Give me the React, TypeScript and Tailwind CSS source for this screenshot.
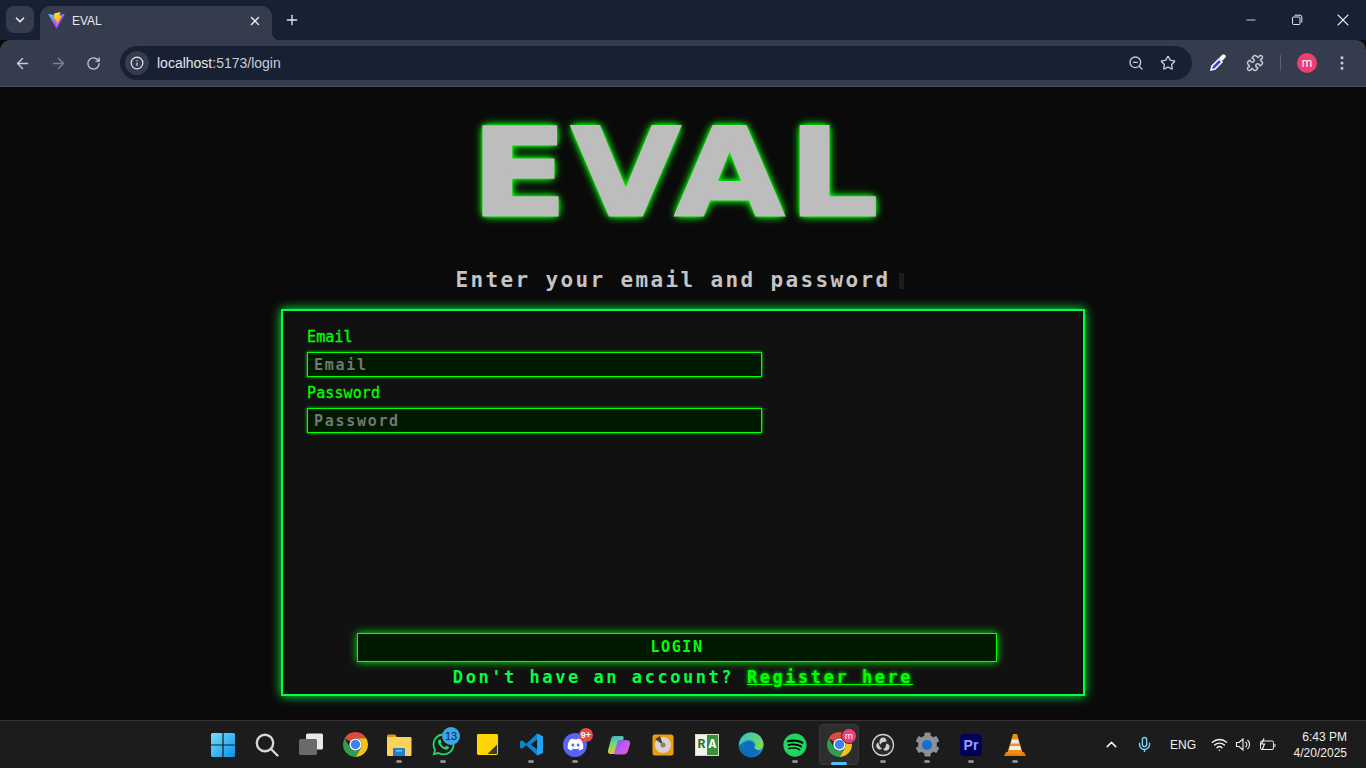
import React from "react";
import { ArrowLeft, ArrowRight, RotateCw, Info, ZoomOut, Star, Puzzle, EllipsisVertical, X, Plus, ChevronDown, ChevronUp, Minus, Mic, Wifi } from "lucide-react";
import { FaWhatsapp, FaDiscord, FaSpotify, FaCog } from "react-icons/fa";

const Vite = () => (
  <svg width="17" height="17" viewBox="0 0 410 404">
    <defs>
      <linearGradient id="va" x1="6" y1="33" x2="235" y2="344" gradientUnits="userSpaceOnUse"><stop stopColor="#41D1FF" /><stop offset="1" stopColor="#BD34FE" /></linearGradient>
      <linearGradient id="vb" x1="194" y1="8" x2="236" y2="293" gradientUnits="userSpaceOnUse"><stop stopColor="#FFEA83" /><stop offset="0.08" stopColor="#FFDD35" /><stop offset="1" stopColor="#FFA800" /></linearGradient>
    </defs>
    <path d="M399.641 59.5246L215.643 388.545C211.844 395.338 202.084 395.378 198.228 388.618L10.5817 59.5563C6.38087 52.1896 12.6802 43.2665 21.0281 44.7586L205.223 77.6824C206.398 77.8924 207.601 77.8904 208.776 77.6763L389.119 44.8058C397.439 43.2894 403.768 52.1434 399.641 59.5246Z" fill="url(#va)" />
    <path d="M292.965 1.5744L156.801 28.2552C154.563 28.6937 152.906 30.5903 152.771 32.8664L144.395 174.33C144.198 177.662 147.258 180.248 150.51 179.498L188.42 170.749C191.967 169.931 195.172 173.055 194.443 176.622L183.18 231.775C182.422 235.487 185.907 238.661 189.532 237.56L212.947 230.446C216.577 229.344 220.065 232.527 219.297 236.242L201.398 322.875C200.278 328.294 207.486 331.249 210.492 326.603L212.5 323.5L323.454 102.072C325.312 98.3645 322.108 94.137 318.036 94.9228L279.014 102.454C275.347 103.161 272.227 99.746 273.262 96.1583L298.731 7.86689C299.767 4.27314 296.636 0.855181 292.965 1.5744Z" fill="url(#vb)" />
  </svg>
);

const Chrome = () => (
  <svg width="25" height="25" viewBox="2 2 20 20">
    <path d="M12 2a10 10 0 0 1 8.66 5H12a5 5 0 0 0-4.33 2.5L3.34 7A10 10 0 0 1 12 2z" fill="#dd4b3e" />
    <path d="M20.66 7A10 10 0 0 1 12 22l4.33-7.5A5 5 0 0 0 12 7z" fill="#f5c21b" />
    <path d="M3.34 7l4.33 7.5A5 5 0 0 0 16.33 14.5L12 22A10 10 0 0 1 3.34 7z" fill="#2f9e4f" />
    <circle cx="12" cy="12" r="4.9" fill="#fff" />
    <circle cx="12" cy="12" r="3.8" fill="#3d82f0" />
  </svg>
);

const Slot = ({ children, dot, active }: { children: React.ReactNode; dot?: boolean; active?: boolean }) => (
  <div className="relative w-11 h-[47px] flex items-center justify-center">
    {active && <div className="absolute left-[2px] top-[3px] w-[40px] h-[41px] rounded bg-[#2e2e2e] border border-[#3a3a3a]" />}
    <div className="relative flex items-center justify-center w-7 h-7">{children}</div>
    {dot && <div className="absolute left-[19px] bottom-[5px] w-[6px] h-[3px] rounded-full bg-[#8a8a8a]" />}
    {active && <div className="absolute left-[14px] bottom-[3px] w-[16px] h-[3px] rounded-full bg-[#4cc2ff]" />}
  </div>
);

const Field = ({ label, type }: { label: string; type: string }) => (
  <div className="flex flex-col">
    <label className="text-[15px] leading-[20px] text-[#00ff00] [-webkit-text-stroke:0.3px_#00ff00] font-['DejaVu_Sans_Mono',monospace] tracking-[0.1px]">{label}</label>
    <input
      type={type}
      placeholder={label}
      className="mt-[5px] w-[455px] h-[25px] px-[6px] bg-[#001a00] border border-[#00ff00] shadow-[0_0_3px_#00ff00] outline-none text-[15px] tracking-[1.7px] font-bold font-['DejaVu_Sans_Mono',monospace] placeholder:text-[#757575]"
    />
  </div>
);

export default function App() {
  return (
    <div className="w-[1366px] h-[768px] overflow-hidden flex flex-col bg-[#0a0a0a] font-['Roboto',sans-serif]">
      {/* tab strip */}
      <div className="h-[40px] bg-[#182133] flex items-end pl-[6px] shrink-0 text-[#e6e8ec]">
        <div className="w-[28px] h-[27px] mb-[7px] rounded-lg bg-[#343c4d] flex items-center justify-center">
          <ChevronDown size={14} strokeWidth={3} />
        </div>
        <div className="relative ml-[6px] w-[232px] h-[34px] rounded-t-[10px] bg-[#343c4d] flex items-center pl-[8px] pr-[10px] pb-[5px]">
          <Vite />
          <span className="ml-[7px] text-[12px] font-['Liberation_Sans',sans-serif] text-[#e6e8ec] flex-1">EVAL</span>
          <X size={14} strokeWidth={2.5} />
          <div className="absolute -right-[8px] bottom-0 w-[8px] h-[8px] bg-[radial-gradient(circle_at_100%_0,transparent_8px,#343c4d_8.5px)]" />
        </div>
        <div className="ml-[12px] mb-[12px] "><Plus size={16} strokeWidth={2} /></div>
        <div className="ml-auto flex items-center h-[40px] text-[#e6e8ec]">
          <div className="w-[46px] flex justify-center"><Minus size={14} strokeWidth={1.5} /></div>
          <div className="w-[46px] flex justify-center">
            <svg width="12" height="12" viewBox="0 0 12 12" fill="none" stroke="currentColor"><rect x="1.5" y="3" width="7.5" height="7.5" rx="1" /><path d="M3.5 1.2h5.5a1.8 1.8 0 0 1 1.8 1.8v5.5" /></svg>
          </div>
          <div className="w-[46px] flex justify-center"><X size={20} strokeWidth={1.3} /></div>
        </div>
      </div>
      {/* toolbar */}
      <div className="h-[47px] bg-[#343c4d] rounded-t-[10px] flex items-center shrink-0 border-b border-[#4a505c] text-[#c7ccd6]">
        <div className="w-[44px] pl-[14px]"><ArrowLeft size={17} strokeWidth={2} /></div>
        <div className="w-[36px] pl-[6px] text-[#7e8594]"><ArrowRight size={17} strokeWidth={2} /></div>
        <div className="w-[40px] pl-[6px]"><RotateCw size={15} strokeWidth={2} /></div>
        <div className="w-[1072px] h-[34px] rounded-full bg-[#182133] flex items-center pl-[5px] pr-[16px]">
          <div className="w-[24px] h-[24px] rounded-full bg-[#343c4d] flex items-center justify-center text-[#e6e8ec]"><Info size={14} /></div>
          <span className="ml-[8px] text-[14px] text-[#e6e8ec] font-['Liberation_Sans',sans-serif]">localhost<span className="text-[#c7ccd6]">:5173/login</span></span>
          <div className="ml-auto flex items-center gap-[16px] text-[#c7ccd6]">
            <ZoomOut size={16} />
            <Star size={16} strokeWidth={2} />
          </div>
        </div>
        <div className="ml-[17px] w-[18px] text-white">
          <svg width="18" height="18" viewBox="0 0 18 18"><path d="M2 16l1-4 7-7 3 3-7 7z" fill="#2b50c8" stroke="#fff" strokeWidth="1.5" /><path d="M10 4l3-3a2 2 0 0 1 3 3l-3 3z" fill="#fff" /></svg>
        </div>
        <div className="ml-[19px] text-[#c7ccd6]"><Puzzle size={18} /></div>
        <div className="ml-[16px] w-px h-[16px] bg-[#5a606e]" />
        <div className="ml-[16px] w-[20px] h-[20px] rounded-full bg-[#ee3f73] text-white text-[12px] flex items-center justify-center">m</div>
        <div className="ml-[16px] text-[#c7ccd6]"><EllipsisVertical size={18} /></div>
      </div>
      {/* page */}
      <main className="flex-1 min-h-0 flex flex-col items-center bg-[#0a0a0a]">
        <h1 className="mt-[22px] h-[129px] leading-[128px] text-[122px] font-bold tracking-[4px] scale-x-[1.15] -ml-[12px] text-[#bdbdbd] [-webkit-text-stroke:3px_#bdbdbd] font-['DejaVu_Sans',sans-serif] [text-shadow:0_0_5px_#00ff00,0_0_5px_#00ff00,0_0_8px_#00ff00,0_0_10px_#00ff00]">EVAL</h1>
        <div className="mt-[30px] h-[24px] flex items-center -ml-[7px] pt-[2px]">
          <span className="text-[21px] font-bold tracking-[2.36px] text-[#c4c4c4] font-['DejaVu_Sans_Mono',monospace]">Enter your email and password</span>
          <span className="ml-[8px] w-[5px] h-[16px] bg-[#1c1c1c]" />
        </div>
        <section className="mt-[17px] w-[804px] h-[387px] border-2 border-[#00ff41] bg-[#111111] shadow-[0_0_10px_#00ff41] pt-[16px] px-[24px] pb-[7px] flex flex-col">
          <div className="flex flex-col gap-[6px]">
            <Field label="Email" type="email" />
            <Field label="Password" type="password" />
          </div>
          <button className="mt-auto ml-[50px] w-[640px] h-[29px] bg-[#001a00] border border-[#00ff00] shadow-[0_0_8px_#00ff00] text-[#00ff00] text-[15px] font-bold tracking-[1.6px] font-['DejaVu_Sans_Mono',monospace]">LOGIN</button>
          <p className="mt-[5px] text-center text-[17px] leading-[20px] font-bold tracking-[2.55px] text-[#00ff41] font-['DejaVu_Sans_Mono',monospace]">
            Don't have an account? <a className="text-[#00ff00] underline [text-shadow:0_0_4px_#00ff00]">Register here</a>
          </p>
        </section>
      </main>
      {/* taskbar */}
      <div className="h-[48px] shrink-0 bg-[#1c1c1c] border-t border-[#333] flex items-center pl-[201px] text-white">
        <Slot>
          <svg width="24" height="24" viewBox="0 0 24 24">
            <defs><linearGradient id="w" x1="0" y1="0" x2="1" y2="1"><stop stopColor="#6fe2ff" /><stop offset="1" stopColor="#0f8fe8" /></linearGradient></defs>
            <path d="M0 1.5A1.5 1.5 0 0 1 1.5 0H11.4V11.4H0zM12.6 0H22.5A1.5 1.5 0 0 1 24 1.5V11.4H12.6zM0 12.6H11.4V24H1.5A1.5 1.5 0 0 1 0 22.5zM12.6 12.6H24V22.5A1.5 1.5 0 0 1 22.5 24H12.6z" fill="url(#w)" />
          </svg>
        </Slot>
        <Slot>
          <svg width="24" height="24" viewBox="0 0 24 24" fill="none" stroke="#d5d5d5" strokeWidth="2.4"><circle cx="10" cy="10" r="8.2" /><path d="M16 16l6.5 6.5" strokeLinecap="round" /></svg>
        </Slot>
        <Slot>
          <svg width="24" height="24" viewBox="0 0 24 24"><rect x="7" y="0.5" width="17" height="16" rx="1.5" fill="#e8e8e8" /><rect x="0" y="6" width="18" height="16" rx="1.5" fill="#6a6a6a" /></svg>
        </Slot>
        <Slot><Chrome /></Slot>
        <Slot dot>
          <svg width="26" height="24" viewBox="0 0 26 24"><path d="M1 3a1.5 1.5 0 0 1 1.5-1.5H9l2 2.5H1z" fill="#d69a12" /><path d="M1 4h23.5a1 1 0 0 1 1 1v17a1 1 0 0 1-1 1H2a1 1 0 0 1-1-1z" fill="#fbd35a" /><path d="M8 15h10a1 1 0 0 1 1 1v7H7v-7a1 1 0 0 1 1-1z" fill="#1f7fd0" /><rect x="10" y="17" width="6" height="1.5" fill="#7fc3f2" /></svg>
        </Slot>
        <Slot dot>
          <FaWhatsapp size={25} color="#25d366" />
          <div className="absolute -right-[3px] -top-[4px] w-[18px] h-[18px] rounded-full bg-[#3ba7e8] text-[#10212e] text-[11px] leading-[18px] text-center font-['Liberation_Sans',sans-serif]">13</div>
        </Slot>
        <Slot>
          <svg width="23" height="23" viewBox="0 0 24 24"><rect x="1" y="1" width="22" height="22" rx="1.5" fill="#ffd400" /><path d="M22 12L12 22h10z" fill="#3a3a3a" /></svg>
        </Slot>
        <Slot dot>
          <svg width="25" height="25" viewBox="0 0 24 24"><path d="M17.5 1.5L23 4.2V19.8L17.5 22.5L7 12.8L2.8 16L1 15V9L2.8 8L7 11.2Z M17.5 7.5L11 12L17.5 16.5Z" fill="#0a85d1" fillRule="evenodd" /><path d="M17.5 1.5L23 4.2V19.8L17.5 22.5Z" fill="#22a4ee" /></svg>
        </Slot>
        <Slot dot>
          <div className="w-[24px] h-[24px] rounded-full bg-[#5865f2] flex items-center justify-center"><FaDiscord size={17} color="#fff" /></div>
          <div className="absolute -right-[4px] -top-[3px] w-[14px] h-[14px] rounded-full bg-[#e5484d] text-white text-[9px] leading-[14px] text-center font-bold font-['Liberation_Sans',sans-serif]">9+</div>
        </Slot>
        <Slot>
          <svg width="24" height="24" viewBox="0 0 24 24">
            <defs>
              <linearGradient id="c1" x1="0" y1="0" x2="0.3" y2="1"><stop stopColor="#2ba8f0" /><stop offset="0.5" stopColor="#6fdc6a" /><stop offset="1" stopColor="#f9b82e" /></linearGradient>
              <linearGradient id="c2" x1="0" y1="0" x2="1" y2="1"><stop stopColor="#6f5cf0" /><stop offset="0.6" stopColor="#c95cf0" /><stop offset="1" stopColor="#f04f90" /></linearGradient>
            </defs>
            <path d="M7 3h8c1.500 0 2 1 1.500 2.500L13 17c-.8 2.500-2.500 4-5 4H3.500C1.500 21 .5 19.500 1 17.500L4 6c.5-2 1.500-3 3-3z" fill="url(#c1)" />
            <path d="M12 7h7.500c2.500 0 4 1.500 3.500 4l-2 7c-.7 2.300-2 3.500-4.500 3.500H9c-1.500 0-2-1-1.500-2.500L10.500 9c.4-1.300.8-2 1.500-2z" fill="url(#c2)" />
          </svg>
        </Slot>
        <Slot>
          <svg width="22" height="22" viewBox="0 0 22 22"><rect x="0.5" y="0.500" width="21" height="21" rx="2.500" fill="#e8a012" /><circle cx="11" cy="11" r="8" fill="#d8d4cc" /><path d="M3 5l8 6-3-9z" fill="#4a4038" /><circle cx="11" cy="11" r="2.500" fill="#8a8278" /></svg>
        </Slot>
        <Slot>
          <div className="w-[24px] h-[22px] flex border border-[#cfe0c0] bg-[#3c8f3c] text-[13px] font-bold font-['Liberation_Mono',monospace] leading-[20px]">
            <span className="w-[11px] bg-[#f0f5ea] text-[#2c6b2c] text-center">R</span>
            <span className="flex-1 text-white text-center">A</span>
          </div>
        </Slot>
        <Slot>
          <svg width="26" height="26" viewBox="0 0 24 24">
            <defs>
              <linearGradient id="e1" x1="0" y1="1" x2="1" y2="0"><stop stopColor="#0c59a4" /><stop offset="1" stopColor="#1fb0dc" /></linearGradient>
              <linearGradient id="e2" x1="0" y1="0" x2="1" y2="0.700"><stop stopColor="#2cc0c8" /><stop offset="1" stopColor="#7fdc5a" /></linearGradient>
            </defs>
            <circle cx="12" cy="12" r="11.500" fill="url(#e1)" />
            <path d="M12 .5C18.500.5 23.500 5.500 23.500 12c0 3-2.500 4.500-5 4.500-2.500 0-4-1-4.500-2 2-.5 2.500-2 2-3.500C15 8 12 7 9 7.500 6 8 3 10 1 13 1 6 6 .5 12 .5z" fill="url(#e2)" />
            <path d="M6 12c0-2 3-3.500 5.500-3 2 .4 3 1.500 3 3 0 3 2.500 5 5.500 5-2 3.500-6 6-9 5.500C7 21.500 5 16 6 12z" fill="#0f6cbd" />
          </svg>
        </Slot>
        <Slot dot><div className="bg-black rounded-full w-[20px] h-[20px] absolute" /><FaSpotify size={24} color="#1ed760" className="relative" /></Slot>
        <Slot active>
          <Chrome />
          <div className="absolute -right-[4px] -top-[3px] w-[16px] h-[16px] rounded-full bg-[#ee3f73] text-white text-[9px] leading-[14px] text-center border border-[#2e2e2e]">m</div>
        </Slot>
        <Slot dot>
          <svg width="24" height="24" viewBox="0 0 24 24" fill="none"><circle cx="12" cy="12" r="10.500" fill="#2a2a2a" stroke="#d0d0d0" strokeWidth="1.300" /><path d="M12 4.500a3.500 3.500 0 0 1 3.300 4.600c-2.800-.8-5 .6-6 2.600-1.800-2.400-.6-7.200 2.700-7.200zM18.500 14a3.500 3.500 0 0 1-6.500 2c2.500-.7 3.200-3 3.200-5.500 2 .3 3.800 1.800 3.300 3.500zM5.500 14a3.500 3.500 0 0 1 2-4.500c0 2.500 1.500 5 3.500 6-1.500 2-4.500 1-5.500-1.500z" fill="#d0d0d0" /></svg>
        </Slot>
        <Slot dot>
          <FaCog size={25} color="#8b8f96" />
          <div className="absolute w-[10px] h-[10px] rounded-full bg-[#1470d0]" />
        </Slot>
        <Slot dot>
          <div className="w-[22px] h-[22px] rounded-[4px] bg-[#00005b] text-[#9a9aff] text-[14px] font-bold text-center leading-[22px] font-['Liberation_Sans',sans-serif]">Pr</div>
        </Slot>
        <Slot dot>
          <svg width="22" height="24" viewBox="0 0 22 24"><path d="M2 19h18l2 4H0z" fill="#e87a0c" /><path d="M9 1h4l6 20H3z" fill="#f28c13" /><path d="M8 6.500h6l1.200 4H6.800zM6 13h10l1.200 4H4.800z" fill="#eeeeee" /></svg>
        </Slot>
        <div className="ml-auto flex items-center h-full text-[#f0f0f0] pr-[19px]">
          <ChevronUp size={17} strokeWidth={2.200} className="mr-[16px]" />
          <Mic size={17} color="#79d0ee" className="mr-[17px]" />
          <span className="w-[24px] text-[12px] font-['Liberation_Sans',sans-serif] mr-[17px]">ENG</span>
          <Wifi size={17} className="mr-[7px]" />
          <svg width="17" height="17" viewBox="0 0 17 17" fill="none" stroke="#f0f0f0" strokeWidth="1.100" className="mr-[7px]"><path d="M1.500 6.500h2.500l4-3.500v11l-4-3.500H1.500z" /><path d="M10.500 6a3 3 0 0 1 0 5M12.500 4a6 6 0 0 1 0 9" /></svg>
          <svg width="17" height="14" viewBox="0 0 17 14" fill="none" stroke="#f0f0f0" className="mr-[16px]"><rect x="1.500" y="3" width="13" height="8.500" rx="1.500" /><path d="M16 6v3" /><path d="M5 0.500L2.500 6h3L3 12" strokeWidth="1.200" /></svg>
          <div className="w-[55px] text-[12px] leading-[16px] text-right font-['Liberation_Sans',sans-serif]">
            <div>6:43 PM</div>
            <div>4/20/2025</div>
          </div>
        </div>
      </div>
    </div>
  );
}
